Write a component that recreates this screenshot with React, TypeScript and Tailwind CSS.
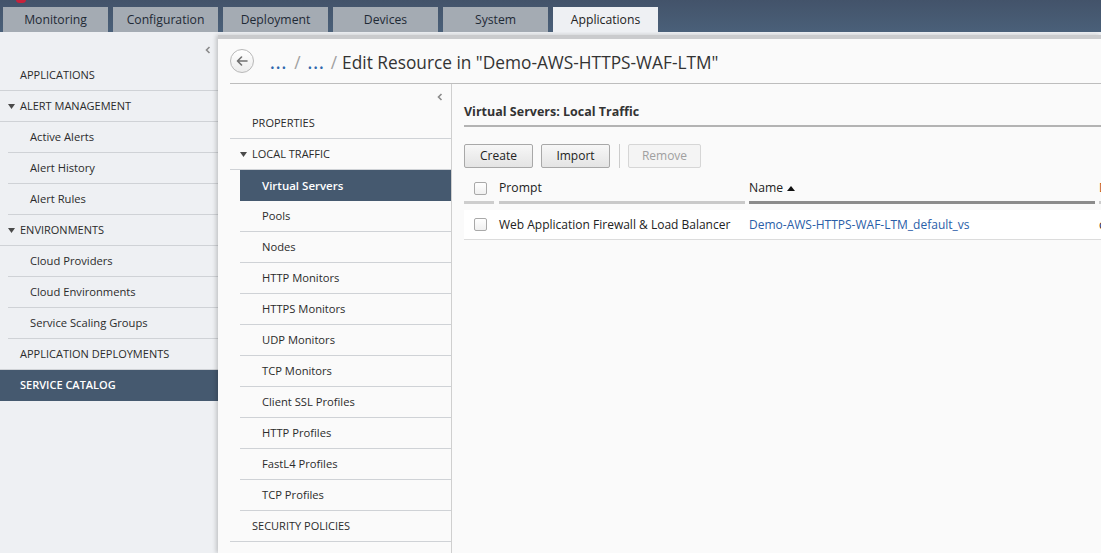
import React from "react";

const Tri = () => (
  <svg width="7" height="5" viewBox="0 0 7 5" className="shrink-0">
    <path d="M0 0 L7 0 L3.5 5 Z" fill="#4a4a4a" />
  </svg>
);

const Chevron = () => (
  <svg width="6" height="8" viewBox="0 0 6 8">
    <path d="M4.5 1 L1.5 4 L4.5 7" stroke="#8a8a8a" strokeWidth="1.6" fill="none" />
  </svg>
);

const Checkbox = () => (
  <div className="w-[13px] h-[13px] border border-[#a9a9a9] rounded-[2px] bg-gradient-to-b from-white to-[#f0f0f0]" />
);

type SideItem = { label: string; kind: "top" | "group" | "child"; selected?: boolean };

const sideItems: SideItem[] = [
  { label: "APPLICATIONS", kind: "top" },
  { label: "ALERT MANAGEMENT", kind: "group" },
  { label: "Active Alerts", kind: "child" },
  { label: "Alert History", kind: "child" },
  { label: "Alert Rules", kind: "child" },
  { label: "ENVIRONMENTS", kind: "group" },
  { label: "Cloud Providers", kind: "child" },
  { label: "Cloud Environments", kind: "child" },
  { label: "Service Scaling Groups", kind: "child" },
  { label: "APPLICATION DEPLOYMENTS", kind: "top" },
  { label: "SERVICE CATALOG", kind: "top", selected: true },
];

const navItems: SideItem[] = [
  { label: "PROPERTIES", kind: "top" },
  { label: "LOCAL TRAFFIC", kind: "group" },
  { label: "Virtual Servers", kind: "child", selected: true },
  { label: "Pools", kind: "child" },
  { label: "Nodes", kind: "child" },
  { label: "HTTP Monitors", kind: "child" },
  { label: "HTTPS Monitors", kind: "child" },
  { label: "UDP Monitors", kind: "child" },
  { label: "TCP Monitors", kind: "child" },
  { label: "Client SSL Profiles", kind: "child" },
  { label: "HTTP Profiles", kind: "child" },
  { label: "FastL4 Profiles", kind: "child" },
  { label: "TCP Profiles", kind: "child" },
  { label: "SECURITY POLICIES", kind: "top" },
];

function SidebarRow({ item, variant }: { item: SideItem; variant: "main" | "nav" }) {
  const childIndent = variant === "main" ? "ml-[8px]" : "ml-[10px]";
  if (item.selected) {
    return (
      <div
        className={`h-[31px] flex items-center bg-[#45596f] text-white ${
          item.kind === "child" ? `${childIndent} pl-[22px] font-semibold text-[11.5px]` : "pl-[20px] font-semibold text-[11px] uppercase"
        }`}
      >
        {item.label}
      </div>
    );
  }
  if (item.kind === "child") {
    return (
      <div className={`${childIndent} h-[31px] flex items-center pl-[22px] border-b border-[#cfd2d6] text-[11.2px] text-[#2b2b2b]`}>
        {item.label}
      </div>
    );
  }
  if (item.kind === "group") {
    return (
      <div
        className={`h-[31px] flex items-center border-b border-[#cfd2d6] text-[11px] text-[#2b2b2b] ${
          variant === "main" ? "pl-[8px] gap-[5px]" : "pl-[10px] gap-[5px]"
        }`}
      >
        <Tri />
        <span>{item.label}</span>
      </div>
    );
  }
  return (
    <div
      className={`h-[31px] flex items-center border-b border-[#cfd2d6] text-[11px] text-[#2b2b2b] ${
        variant === "main" ? "pl-[20px]" : "pl-[22px]"
      }`}
    >
      {item.label}
    </div>
  );
}

const tabs = ["Monitoring", "Configuration", "Deployment", "Devices", "System", "Applications"];

export default function App() {
  return (
    <div className="w-[1101px] h-[553px] overflow-hidden flex flex-col bg-[#eef0f3] font-['Open_Sans',sans-serif] text-[#2b2b2b]">
      {/* Top bar */}
      <div className="relative h-[32px] shrink-0 bg-gradient-to-b from-[#43536a] to-[#4a6079] flex items-end pl-[3px] gap-[5px]">
        <div className="absolute left-[16px] top-[-4px] w-[10px] h-[7px] rounded-full bg-[#c8223b]" />
        {tabs.map((t) => (
          <div
            key={t}
            className={`w-[105px] h-[25px] pt-[2px] flex items-center justify-center text-[12.2px] ${
              t === "Applications" ? "bg-[#eef0f3] text-[#222]" : "bg-[#a4abb3] text-[#1f2a36]"
            }`}
          >
            {t}
          </div>
        ))}
      </div>

      <div className="flex flex-1 min-h-0">
        {/* Left sidebar */}
        <aside className="w-[218px] shrink-0 flex flex-col">
          <div className="h-[28px] flex items-center justify-end pr-[7px] pt-[8px]">
            <Chevron />
          </div>
          {sideItems.map((it) => (
            <SidebarRow key={it.label} item={it} variant="main" />
          ))}
        </aside>

        {/* Main panel */}
        <main className="flex-1 min-w-0 mt-[3px] flex flex-col bg-[#fafafa] border-t-[4px] border-[#cacbcd] shadow-[-2px_0_4px_rgba(0,0,0,0.18)] pl-[12px] overflow-hidden">
          <div className="h-[45px] shrink-0 flex items-center border-b border-[#bdbdbd]">
            <div className="w-[24px] h-[24px] rounded-full border border-[#b8b8b8] bg-gradient-to-b from-white to-[#ececec] flex items-center justify-center">
              <svg width="12" height="10" viewBox="0 0 12 10">
                <path d="M11 5 H1.8 M5.5 1 L1.5 5 L5.5 9" stroke="#707070" strokeWidth="1.6" fill="none" strokeLinecap="round" strokeLinejoin="round" />
              </svg>
            </div>
            <div className="ml-[16px] pt-[3px] flex items-center text-[17.3px] leading-none">
              <span className="text-[#2e67ad] font-semibold tracking-[1px]">...</span>
              <span className="text-[#a0a0a0] mx-[7px]">/</span>
              <span className="text-[#2e67ad] font-semibold tracking-[1px]">...</span>
              <span className="text-[#a0a0a0] ml-[6px] mr-[5px]">/</span>
              <span className="text-[#333]">Edit Resource in "Demo-AWS-HTTPS-WAF-LTM"</span>
            </div>
          </div>

          <div className="flex flex-1 min-h-0">
            {/* Secondary nav */}
            <nav className="w-[222px] shrink-0 flex flex-col border-r border-[#cfcfcf]">
              <div className="h-[24px] flex items-center justify-end pr-[8px] pt-[2px]">
                <Chevron />
              </div>
              {navItems.map((it) => (
                <SidebarRow key={it.label} item={it} variant="nav" />
              ))}
            </nav>

            {/* Content */}
            <section className="flex-1 min-w-0 pl-[12px]">
              <div className="pt-[19px] pb-[4px] border-b-2 border-[#b3b3b3]">
                <div className="leading-[18px] text-[12.5px] font-bold text-[#333]">Virtual Servers: Local Traffic</div>
              </div>

              <div className="mt-[17px] flex items-center">
                <button className="w-[69px] h-[24px] border border-[#a8a8a8] rounded-[2px] bg-gradient-to-b from-[#f7f7f7] to-[#e4e4e4] text-[12px] text-[#222]">
                  Create
                </button>
                <button className="ml-[8px] w-[69px] h-[24px] border border-[#a8a8a8] rounded-[2px] bg-gradient-to-b from-[#f7f7f7] to-[#e4e4e4] text-[12px] text-[#222]">
                  Import
                </button>
                <div className="ml-[9px] w-px h-[24px] bg-[#cccccc]" />
                <button className="ml-[8px] w-[73px] h-[24px] border border-[#d6d6d6] rounded-[2px] bg-[#f4f4f4] text-[12px] text-[#a0a0a0]">
                  Remove
                </button>
              </div>

              {/* Table header */}
              <div className="mt-[8px] flex whitespace-nowrap">
                <div className="w-[35px] shrink-0 flex flex-col">
                  <div className="h-[24px] flex items-center pl-[10px]">
                    <Checkbox />
                  </div>
                  <div className="mt-[1px] mr-[5px] h-[3px] bg-[#cdcdcd]" />
                </div>
                <div className="w-[250px] shrink-0 flex flex-col">
                  <div className="h-[24px] flex items-center text-[12.2px] text-[#222]">Prompt</div>
                  <div className="mt-[1px] mr-[4px] h-[3px] bg-[#c9c9c9]" />
                </div>
                <div className="w-[350px] shrink-0 flex flex-col">
                  <div className="h-[24px] flex items-center gap-[4px] text-[12.2px] text-[#222]">
                    Name
                    <svg width="8" height="5" viewBox="0 0 8 5">
                      <path d="M0 5 L4 0 L8 5 Z" fill="#111" />
                    </svg>
                  </div>
                  <div className="mt-[1px] mr-[4px] h-[3px] bg-[#8c8c8c]" />
                </div>
                <div className="w-[200px] shrink-0 flex flex-col">
                  <div className="h-[24px] flex items-center text-[12.2px] text-[#b4541c]">Deployed</div>
                  <div className="mt-[1px] h-[3px] bg-[#cdcdcd]" />
                </div>
              </div>

              {/* Row */}
              <div className="mt-[6px] h-[30px] flex items-center bg-white border-b border-[#dcdcdc] whitespace-nowrap">
                <div className="w-[35px] shrink-0 pl-[10px]">
                  <Checkbox />
                </div>
                <div className="w-[250px] shrink-0 text-[12px] text-[#222]">Web Application Firewall &amp; Load Balancer</div>
                <div className="w-[350px] shrink-0 text-[12px] text-[#2a5ea8]">Demo-AWS-HTTPS-WAF-LTM_default_vs</div>
                <div className="w-[200px] shrink-0 text-[12px] text-[#222]">completed</div>
              </div>
            </section>
          </div>
        </main>
      </div>
    </div>
  );
}
